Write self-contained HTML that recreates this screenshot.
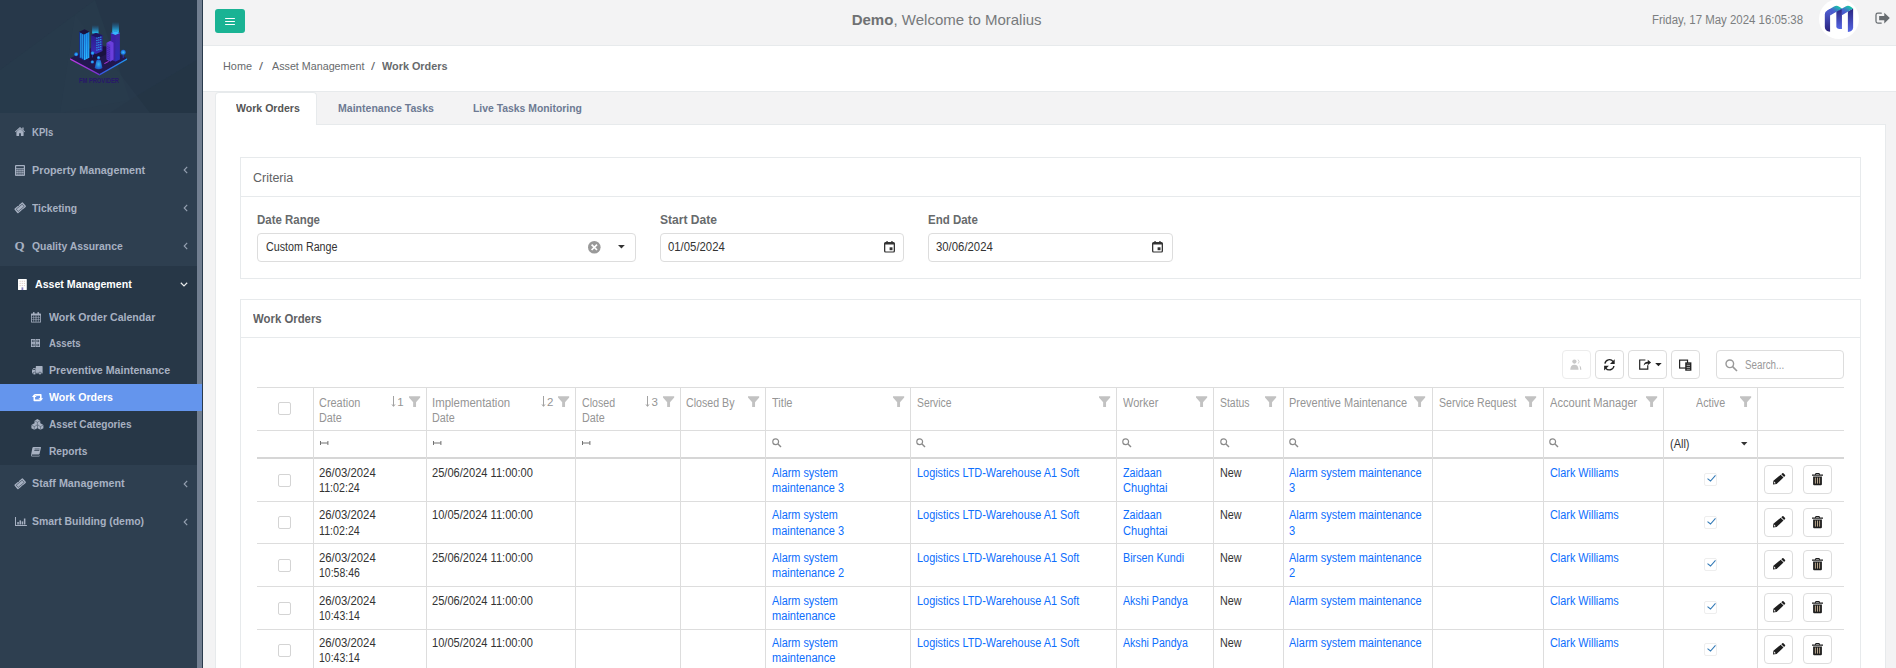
<!DOCTYPE html><html lang="en"><head><meta charset="utf-8"><title>Work Orders</title><style>
html,body{margin:0;padding:0}
body{width:1896px;height:668px;overflow:hidden;background:#f3f3f4;font-family:"Liberation Sans",sans-serif;position:relative;color:#676a6c}
.t{position:absolute;white-space:pre;line-height:1;transform-origin:0 50%}
.a{position:absolute;box-sizing:border-box}
svg{position:absolute;overflow:visible}
#side{left:0;top:0;width:197px;height:668px;background:#2e3f50}
#logo{left:0;top:0;width:197px;height:113px;background:#263848;overflow:hidden}
#strip{left:197px;top:0;width:5px;height:668px;background:#717e90}
#sline{left:202px;top:0;width:1px;height:668px;background:#2a3b4d}
#amsec{left:0;top:266px;width:197px;height:199px;background:#273747}
#amact{left:0;top:384px;width:202px;height:27px;background:#6495ed}
#head{left:203px;top:0;width:1693px;height:46px;background:#f3f3f4;border-bottom:1px solid #e7eaec}
#crumb{left:203px;top:46px;width:1693px;height:46px;background:#fff;border-bottom:1px solid #e7eaec}
#menu{left:215px;top:9px;width:30px;height:24px;background:#1ab394;border-radius:3px}
#menu i{position:absolute;left:10px;width:10px;height:1.700px;background:#fff;border-radius:.5px}
#avatar{left:1819px;top:-1px;width:40px;height:40px;border-radius:50%;background:#fff;overflow:hidden}
#tab1{left:215px;top:92px;width:102px;height:33px;background:#fff;border:1px solid #e7eaec;border-bottom:none;border-radius:4px 4px 0 0}
#tabpane{left:215px;top:124px;width:1671px;height:560px;background:#fff;border:1px solid #e7eaec;border-top:none}
#tabline{left:317px;top:124px;width:1569px;height:1px;background:#e7eaec}
.box{background:#fff;border:1px solid #e7eaec}
.hl{background:#e7eaec;height:1px}
.inp{border:1px solid #ddd;border-radius:4px;background:#fff}
.btn{border:1px solid #ddd;border-radius:4px;background:#fff;width:29px;height:29px}
.cb{width:13px;height:13px;border:1px solid #d4d4d4;border-radius:2px;background:#fff}
.vl{width:1px;background:#ddd}
.rl{height:1px;background:#ddd}
</style></head><body><header class="a" id="head"></header><div class="a" id="menu"><i style="top:8.700px"></i><i style="top:11.600px"></i><i style="top:14.500px"></i></div><span class="t" style="left:851.7px;top:12.0px;font-size:15px;color:#6f7173;font-weight:700;">Demo</span><span class="t" style="left:893.5px;top:12.0px;font-size:15px;color:#777a7c;">, Welcome to Moralius</span><span class="t" style="left:1652.2px;top:13.5px;font-size:12px;color:#7b7e80;transform:scaleX(0.9530);">Friday, 17 May 2024 16:05:38</span><div class="a" id="avatar"><svg style="left:-9px;top:1px" width="86" height="44" viewBox="0 0 1306 668"><defs>
<linearGradient id="mg1" x1="0" y1="0" x2="0" y2="1"><stop offset="0" stop-color="#5262d6"/><stop offset="1" stop-color="#29227c"/></linearGradient>
<linearGradient id="mg2" x1="0" y1="0" x2="0" y2="1"><stop offset="0" stop-color="#2a2480"/><stop offset="1" stop-color="#5566e4"/></linearGradient>
<linearGradient id="mg3" x1="0" y1="1" x2="1" y2="0"><stop offset="0" stop-color="#4650c4"/><stop offset=".45" stop-color="#4a60d0"/><stop offset=".8" stop-color="#1fb8b0"/><stop offset="1" stop-color="#0fd89a"/></linearGradient>
</defs>
<path d="M225 215Q225 175 262 158L305 138V482Q225 470 225 410z" fill="url(#mg1)"/>
<path d="M400 165 485 130V440H450Q400 440 400 400z" fill="url(#mg2)"/>
<path d="M575 175 655 130V420Q655 470 575 485z" fill="url(#mg2)"/>
<path d="M262 158 365 98Q405 78 445 102L485 130 305 235V190z" fill="url(#mg3)"/>
<path d="M400 178 540 98Q580 78 620 102L655 130 485 230V140z" fill="url(#mg3)"/></svg></div><svg style="left:1810px;top:0px" width="86" height="44" viewBox="0 0 1306 668"><path d="M1082 200H1030Q1002 200 1002 228V322Q1002 350 1030 350H1082" fill="none" stroke="#676c70" stroke-width="19" stroke-linecap="round"/><path d="M1050 243H1128V192L1212 275 1128 358V307H1050z" fill="#676c70"/></svg><div class="a" id="crumb"></div><span class="t" style="left:223.0px;top:61.0px;font-size:11px;color:#676a6c;transform:scaleX(0.9883);">Home</span><span class="t" style="left:258.5px;top:61.0px;font-size:11px;color:#676a6c;transform:scaleX(1.3061);">/</span><span class="t" style="left:272.0px;top:61.0px;font-size:11px;color:#676a6c;transform:scaleX(0.9749);">Asset Management</span><span class="t" style="left:371.0px;top:61.0px;font-size:11px;color:#676a6c;transform:scaleX(1.3061);">/</span><span class="t" style="left:381.8px;top:61.0px;font-size:11px;color:#676a6c;font-weight:700;transform:scaleX(0.9859);">Work Orders</span><div class="a" id="tabpane"></div><div class="a" id="tab1"></div><div class="a" id="tabline"></div><span class="t" style="left:236.0px;top:102.8px;font-size:11px;color:#555;font-weight:700;transform:scaleX(0.9603);">Work Orders</span><span class="t" style="left:338.4px;top:102.8px;font-size:11px;color:#6d7a93;font-weight:700;transform:scaleX(0.9584);">Maintenance Tasks</span><span class="t" style="left:472.6px;top:102.8px;font-size:11px;color:#6d7a93;font-weight:700;transform:scaleX(0.9444);">Live Tasks Monitoring</span><section class="a box" style="left:240px;top:157px;width:1621px;height:122px"></section><div class="a hl" style="left:241px;top:196px;width:1619px"></div><span class="t" style="left:253.0px;top:171.8px;font-size:12px;color:#5f6264;transform:scaleX(1.0395);">Criteria</span><span class="t" style="left:257.4px;top:214.0px;font-size:12px;color:#676a6c;font-weight:700;transform:scaleX(0.9541);">Date Range</span><span class="t" style="left:660.0px;top:214.0px;font-size:12px;color:#676a6c;font-weight:700;transform:scaleX(1.0055);">Start Date</span><span class="t" style="left:928.4px;top:214.0px;font-size:12px;color:#676a6c;font-weight:700;transform:scaleX(0.9574);">End Date</span><div class="a inp" style="left:257px;top:233px;width:379px;height:29px"></div><div class="a inp" style="left:660px;top:233px;width:244px;height:29px"></div><div class="a inp" style="left:928px;top:233px;width:245px;height:29px"></div><span class="t" style="left:265.7px;top:241.4px;font-size:12px;color:#333;transform:scaleX(0.8932);">Custom Range</span><span class="t" style="left:667.8px;top:241.4px;font-size:12px;color:#333;transform:scaleX(0.9457);">01/05/2024</span><span class="t" style="left:936.2px;top:241.4px;font-size:12px;color:#333;transform:scaleX(0.9457);">30/06/2024</span><svg style="left:587.5px;top:241px" width="12.6" height="12.6" viewBox="0 0 12.6 12.6" ><circle cx="6.3" cy="6.3" r="6.3" fill="#999"/><path d="M3.6 3.6 9 9M9 3.6 3.6 9" stroke="#fff" stroke-width="1.7"/></svg><svg style="left:617.6px;top:245.3px" width="6.8" height="3.4" viewBox="0 0 6.8 3.4" ><path d="M0 0H6.800L3.400 3.400z" fill="#333"/></svg><svg style="left:884px;top:241px" width="11" height="11.6" viewBox="0 0 11 11.6" ><path fill-rule="evenodd" fill="#333" d="M1.500 1.100h.9v-1.100h1.300v1.100h3.600v-1.100h1.300v1.100h.900q1.500 0 1.500 1.500v7.500q0 1.500-1.500 1.500h-8q-1.500 0-1.500-1.500v-7.500q0-1.500 1.500-1.500zM1.300 3.600v6.400q0 .4.400.4h7.600q.4 0 .4-.4v-6.400z"/><rect x="5.600" y="6.300" width="2.900" height="2.900" fill="#333"/></svg><svg style="left:1152.3px;top:241px" width="11" height="11.6" viewBox="0 0 11 11.6" ><path fill-rule="evenodd" fill="#333" d="M1.500 1.100h.9v-1.100h1.300v1.100h3.600v-1.100h1.300v1.100h.900q1.500 0 1.500 1.500v7.500q0 1.500-1.500 1.500h-8q-1.500 0-1.500-1.500v-7.500q0-1.500 1.500-1.500zM1.300 3.600v6.400q0 .4.400.4h7.600q.4 0 .4-.4v-6.400z"/><rect x="5.600" y="6.300" width="2.900" height="2.900" fill="#333"/></svg><section class="a box" style="left:240px;top:299px;width:1621px;height:400px"></section><div class="a hl" style="left:241px;top:337px;width:1619px"></div><span class="t" style="left:253.0px;top:313.0px;font-size:12px;color:#5f6264;font-weight:700;transform:scaleX(0.9480);">Work Orders</span><div class="a btn" style="left:1562px;top:350px;border-color:#ececec"></div><div class="a btn" style="left:1595px;top:350px"></div><div class="a btn" style="left:1628px;top:350px;width:39px"></div><div class="a btn" style="left:1671px;top:350px"></div><div class="a inp" style="left:1716px;top:350px;width:128px;height:29px"></div><span class="t" style="left:1744.8px;top:359.0px;font-size:12px;color:#999;transform:scaleX(0.8161);">Search...</span><svg style="left:1556px;top:344px" width="150" height="40" viewBox="0 0 1896 506"><g fill="#c9c9c9"><circle cx="232" cy="222" r="27"/><path d="M180 327Q180 262 232 262Q284 262 284 327z"/><path d="M278 198Q305 222 280 248" fill="none" stroke="#c9c9c9" stroke-width="10"/><path d="M296 268Q322 285 320 327H304Q304 290 296 268z"/></g><g fill="none" stroke="#222" stroke-width="17"><path d="M618 248A58 58 0 0 1 722 222"/><path d="M732 278A58 58 0 0 1 628 304"/></g><path d="M742 192V252H682z" fill="#222"/><path d="M608 334V274H668z" fill="#222"/><path d="M1130 202H1058V318H1160V270" fill="none" stroke="#222" stroke-width="15"/><path d="M1108 272Q1112 226 1160 224V200L1202 234 1160 268V246Q1128 246 1108 272z" fill="#222"/><path d="M1254 240H1336L1295 282z" fill="#222"/><rect x="1563" y="204" width="100" height="100" fill="none" stroke="#222" stroke-width="15"/><rect x="1634" y="232" width="78" height="106" fill="#222"/><rect x="1652" y="262" width="42" height="16" fill="#999"/><rect x="1652" y="290" width="42" height="16" fill="#999"/><rect x="1652" y="316" width="42" height="10" fill="#999"/><rect x="1652" y="246" width="42" height="6" fill="#777"/></svg><svg style="left:1724.5px;top:358.6px" width="13" height="13" viewBox="0 0 13 13" ><circle cx="4.800" cy="4.800" r="3.800" fill="none" stroke="#999" stroke-width="1.400"/><path d="M7.600 7.600 12 12" stroke="#999" stroke-width="1.600"/></svg><div class="a rl" style="left:257px;top:387px;width:1587px"></div><div class="a rl" style="left:257px;top:430px;width:1587px"></div><div class="a rl" style="left:257px;top:457px;width:1587px;height:2px;background:#d6d6d6"></div><div class="a rl" style="left:257px;top:501px;width:1587px"></div><div class="a rl" style="left:257px;top:543px;width:1587px"></div><div class="a rl" style="left:257px;top:586px;width:1587px"></div><div class="a rl" style="left:257px;top:629px;width:1587px"></div><div class="a vl" style="left:313px;top:388px;height:280px"></div><div class="a vl" style="left:426px;top:388px;height:280px"></div><div class="a vl" style="left:575px;top:388px;height:280px"></div><div class="a vl" style="left:680px;top:388px;height:280px"></div><div class="a vl" style="left:765px;top:388px;height:280px"></div><div class="a vl" style="left:910px;top:388px;height:280px"></div><div class="a vl" style="left:1116px;top:388px;height:280px"></div><div class="a vl" style="left:1213px;top:388px;height:280px"></div><div class="a vl" style="left:1283px;top:388px;height:280px"></div><div class="a vl" style="left:1432px;top:388px;height:280px"></div><div class="a vl" style="left:1543px;top:388px;height:280px"></div><div class="a vl" style="left:1663px;top:388px;height:280px"></div><div class="a vl" style="left:1757px;top:388px;height:280px"></div><span class="t" style="left:319.2px;top:396.6px;font-size:12px;color:#959595;transform:scaleX(0.9105);">Creation</span><span class="t" style="left:319.2px;top:411.6px;font-size:12px;color:#959595;transform:scaleX(0.8991);">Date</span><span class="t" style="left:432.3px;top:396.6px;font-size:12px;color:#959595;transform:scaleX(0.9519);">Implementation</span><span class="t" style="left:432.3px;top:411.6px;font-size:12px;color:#959595;transform:scaleX(0.8991);">Date</span><span class="t" style="left:581.9px;top:396.6px;font-size:12px;color:#959595;transform:scaleX(0.8860);">Closed</span><span class="t" style="left:581.9px;top:411.6px;font-size:12px;color:#959595;transform:scaleX(0.8991);">Date</span><span class="t" style="left:686.4px;top:396.6px;font-size:12px;color:#959595;transform:scaleX(0.8866);">Closed By</span><span class="t" style="left:772.0px;top:396.6px;font-size:12px;color:#959595;transform:scaleX(0.9220);">Title</span><span class="t" style="left:916.7px;top:396.6px;font-size:12px;color:#959595;transform:scaleX(0.8622);">Service</span><span class="t" style="left:1122.7px;top:396.6px;font-size:12px;color:#959595;transform:scaleX(0.9180);">Worker</span><span class="t" style="left:1220.4px;top:396.6px;font-size:12px;color:#959595;transform:scaleX(0.8698);">Status</span><span class="t" style="left:1289.4px;top:396.6px;font-size:12px;color:#959595;transform:scaleX(0.9165);">Preventive Maintenance</span><span class="t" style="left:1438.5px;top:396.6px;font-size:12px;color:#959595;transform:scaleX(0.8791);">Service Request</span><span class="t" style="left:1549.7px;top:396.6px;font-size:12px;color:#959595;transform:scaleX(0.9281);">Account Manager</span><span class="t" style="left:1696.2px;top:396.6px;font-size:12px;color:#959595;transform:scaleX(0.8933);">Active</span><span class="t" style="left:1669.9px;top:438.0px;font-size:12px;color:#333;transform:scaleX(0.9143);">(All)</span><div class="a cb" style="left:278px;top:402px"></div><svg style="left:390.7px;top:395.8px" width="5" height="11" viewBox="0 0 5 11" ><path d="M2.500 0V10M1 8.400 2.500 10.400 4 8.400" fill="none" stroke="#a2a2a2" stroke-width="1"/></svg><span class="t" style="left:397.2px;top:396.500px;font-size:11.500px;color:#959595">1</span><svg style="left:540.5px;top:395.8px" width="5" height="11" viewBox="0 0 5 11" ><path d="M2.500 0V10M1 8.400 2.500 10.400 4 8.400" fill="none" stroke="#a2a2a2" stroke-width="1"/></svg><span class="t" style="left:547.0px;top:396.500px;font-size:11.500px;color:#959595">2</span><svg style="left:645px;top:395.8px" width="5" height="11" viewBox="0 0 5 11" ><path d="M2.500 0V10M1 8.400 2.500 10.400 4 8.400" fill="none" stroke="#a2a2a2" stroke-width="1"/></svg><span class="t" style="left:651.5px;top:396.500px;font-size:11.500px;color:#959595">3</span><svg style="left:408.5px;top:395.6px" width="11.2" height="11.2" viewBox="0 0 11.6 11.2" ><path d="M0 0H11.600V1.400L7.300 6.300V11.200H4.300V6.300L0 1.400z" fill="#c2c2c2"/></svg><svg style="left:557.5px;top:395.6px" width="11.2" height="11.2" viewBox="0 0 11.6 11.2" ><path d="M0 0H11.600V1.400L7.300 6.300V11.200H4.300V6.300L0 1.400z" fill="#c2c2c2"/></svg><svg style="left:662.6px;top:395.6px" width="11.2" height="11.2" viewBox="0 0 11.6 11.2" ><path d="M0 0H11.600V1.400L7.300 6.300V11.200H4.300V6.300L0 1.400z" fill="#c2c2c2"/></svg><svg style="left:748px;top:395.6px" width="11.2" height="11.2" viewBox="0 0 11.6 11.2" ><path d="M0 0H11.600V1.400L7.300 6.300V11.200H4.300V6.300L0 1.400z" fill="#c2c2c2"/></svg><svg style="left:892.5px;top:395.6px" width="11.2" height="11.2" viewBox="0 0 11.6 11.2" ><path d="M0 0H11.600V1.400L7.300 6.300V11.200H4.300V6.300L0 1.400z" fill="#c2c2c2"/></svg><svg style="left:1098.5px;top:395.6px" width="11.2" height="11.2" viewBox="0 0 11.6 11.2" ><path d="M0 0H11.600V1.400L7.300 6.300V11.200H4.300V6.300L0 1.400z" fill="#c2c2c2"/></svg><svg style="left:1195.6px;top:395.6px" width="11.2" height="11.2" viewBox="0 0 11.6 11.2" ><path d="M0 0H11.600V1.400L7.300 6.300V11.200H4.300V6.300L0 1.400z" fill="#c2c2c2"/></svg><svg style="left:1265.3px;top:395.6px" width="11.2" height="11.2" viewBox="0 0 11.6 11.2" ><path d="M0 0H11.600V1.400L7.300 6.300V11.200H4.300V6.300L0 1.400z" fill="#c2c2c2"/></svg><svg style="left:1414.3px;top:395.6px" width="11.2" height="11.2" viewBox="0 0 11.6 11.2" ><path d="M0 0H11.600V1.400L7.300 6.300V11.200H4.300V6.300L0 1.400z" fill="#c2c2c2"/></svg><svg style="left:1525.4px;top:395.6px" width="11.2" height="11.2" viewBox="0 0 11.6 11.2" ><path d="M0 0H11.600V1.400L7.300 6.300V11.200H4.300V6.300L0 1.400z" fill="#c2c2c2"/></svg><svg style="left:1645.8px;top:395.6px" width="11.2" height="11.2" viewBox="0 0 11.6 11.2" ><path d="M0 0H11.600V1.400L7.300 6.300V11.200H4.300V6.300L0 1.400z" fill="#c2c2c2"/></svg><svg style="left:1740.2px;top:395.6px" width="11.2" height="11.2" viewBox="0 0 11.6 11.2" ><path d="M0 0H11.600V1.400L7.300 6.300V11.200H4.300V6.300L0 1.400z" fill="#c2c2c2"/></svg><svg style="left:319.8px;top:440.7px" width="8.4" height="4" viewBox="0 0 8.4 4" ><path d="M.5 0V4M7.900 0V4M.5 2H7.900" stroke="#707070" stroke-width="1" fill="none"/></svg><svg style="left:432.8px;top:440.7px" width="8.4" height="4" viewBox="0 0 8.4 4" ><path d="M.5 0V4M7.900 0V4M.5 2H7.900" stroke="#707070" stroke-width="1" fill="none"/></svg><svg style="left:582.4px;top:440.7px" width="8.4" height="4" viewBox="0 0 8.4 4" ><path d="M.5 0V4M7.900 0V4M.5 2H7.900" stroke="#707070" stroke-width="1" fill="none"/></svg><svg style="left:771.6px;top:437.8px" width="9.6" height="9.6" viewBox="0 0 9.6 9.6" ><circle cx="3.700" cy="3.700" r="2.900" fill="none" stroke="#8a8a8a" stroke-width="1.200"/><path d="M5.800 5.800 9 9" stroke="#8a8a8a" stroke-width="1.400"/></svg><svg style="left:916.3px;top:437.8px" width="9.6" height="9.6" viewBox="0 0 9.6 9.6" ><circle cx="3.700" cy="3.700" r="2.900" fill="none" stroke="#8a8a8a" stroke-width="1.200"/><path d="M5.800 5.800 9 9" stroke="#8a8a8a" stroke-width="1.400"/></svg><svg style="left:1122.3px;top:437.8px" width="9.6" height="9.6" viewBox="0 0 9.6 9.6" ><circle cx="3.700" cy="3.700" r="2.900" fill="none" stroke="#8a8a8a" stroke-width="1.200"/><path d="M5.800 5.800 9 9" stroke="#8a8a8a" stroke-width="1.400"/></svg><svg style="left:1220px;top:437.8px" width="9.6" height="9.6" viewBox="0 0 9.6 9.6" ><circle cx="3.700" cy="3.700" r="2.900" fill="none" stroke="#8a8a8a" stroke-width="1.200"/><path d="M5.800 5.800 9 9" stroke="#8a8a8a" stroke-width="1.400"/></svg><svg style="left:1289px;top:437.8px" width="9.6" height="9.6" viewBox="0 0 9.6 9.6" ><circle cx="3.700" cy="3.700" r="2.900" fill="none" stroke="#8a8a8a" stroke-width="1.200"/><path d="M5.800 5.800 9 9" stroke="#8a8a8a" stroke-width="1.400"/></svg><svg style="left:1549.3px;top:437.8px" width="9.6" height="9.6" viewBox="0 0 9.6 9.6" ><circle cx="3.700" cy="3.700" r="2.900" fill="none" stroke="#8a8a8a" stroke-width="1.200"/><path d="M5.800 5.800 9 9" stroke="#8a8a8a" stroke-width="1.400"/></svg><svg style="left:1740.8px;top:441.8px" width="6.4" height="3.4" viewBox="0 0 6.4 3.4" ><path d="M0 0H6.400L3.200 3.400z" fill="#333"/></svg><div class="a cb" style="left:278px;top:474px"></div><span class="t" style="left:319.2px;top:467.2px;font-size:12px;color:#333;transform:scaleX(0.9440);">26/03/2024</span><span class="t" style="left:319.2px;top:482.2px;font-size:12px;color:#333;transform:scaleX(0.8903);">11:02:24</span><span class="t" style="left:432.3px;top:467.2px;font-size:12px;color:#333;transform:scaleX(0.9238);">25/06/2024 11:00:00</span><span class="t" style="left:772.0px;top:467.2px;font-size:12px;color:#0d6efd;transform:scaleX(0.9052);">Alarm system</span><span class="t" style="left:772.0px;top:482.2px;font-size:12px;color:#0d6efd;transform:scaleX(0.9145);">maintenance 3</span><span class="t" style="left:916.7px;top:467.2px;font-size:12px;color:#0d6efd;transform:scaleX(0.9085);">Logistics LTD-Warehouse A1 Soft</span><span class="t" style="left:1122.7px;top:467.2px;font-size:12px;color:#0d6efd;transform:scaleX(0.8922);">Zaidaan</span><span class="t" style="left:1122.7px;top:482.2px;font-size:12px;color:#0d6efd;transform:scaleX(0.9241);">Chughtai</span><span class="t" style="left:1220.4px;top:467.2px;font-size:12px;color:#333;transform:scaleX(0.8994);">New</span><span class="t" style="left:1289.4px;top:467.2px;font-size:12px;color:#0d6efd;transform:scaleX(0.9162);">Alarm system maintenance</span><span class="t" style="left:1289.4px;top:482.2px;font-size:12px;color:#0d6efd;transform:scaleX(0.9271);">3</span><span class="t" style="left:1549.7px;top:467.2px;font-size:12px;color:#0d6efd;transform:scaleX(0.9053);">Clark Williams</span><div class="a btn" style="left:1764px;top:465px"></div><div class="a btn" style="left:1803px;top:465px"></div><div class="a" style="left:1704.4px;top:473.2px;width:12.400px;height:12.400px;border:1px solid #eee;border-radius:2px"></div><svg style="left:1706.6px;top:474.8px" width="9" height="6.6" viewBox="0 0 9 6.6" ><path d="M.5 3.600 3.500 6 8.500 .4" fill="none" stroke="#337ab7" stroke-width="1.100"/></svg><svg style="left:1772.6px;top:473.4px" width="12.4" height="11.4" viewBox="0 0 12.4 11.4" ><g fill="#1e1e1e"><path d="M9.300 0.200Q9.900-.3 10.500.3L12.100 1.900Q12.600 2.500 12 3.100L11.100 4 8.300 1.200z"/><path d="M7.700 1.800 10.500 4.600 3.600 11 0 11.400.4 7.800zM1.200 8.600 1 10.400 2.800 10.200z" fill-rule="evenodd"/></g></svg><svg style="left:1811.6px;top:472.8px" width="11" height="12.2" viewBox="0 0 11 12.2" ><g fill="#1e1e1e"><path d="M3.600 0H7.400L8 1.600H11V2.800H0V1.600H3zM4.200 .9 4 1.600H7L6.800.9z" fill-rule="evenodd"/><path d="M1.100 3.400H9.900V11.200Q9.900 12.200 8.900 12.200H2.100Q1.100 12.200 1.100 11.200z"/></g><g fill="#b9a68c"><rect x="2.900" y="4.600" width="1" height="6"/><rect x="5" y="4.600" width="1" height="6"/><rect x="7.100" y="4.600" width="1" height="6"/></g></svg><div class="a cb" style="left:278px;top:516px"></div><span class="t" style="left:319.2px;top:509.2px;font-size:12px;color:#333;transform:scaleX(0.9440);">26/03/2024</span><span class="t" style="left:319.2px;top:525.0px;font-size:12px;color:#333;transform:scaleX(0.8903);">11:02:24</span><span class="t" style="left:432.3px;top:509.2px;font-size:12px;color:#333;transform:scaleX(0.9238);">10/05/2024 11:00:00</span><span class="t" style="left:772.0px;top:509.2px;font-size:12px;color:#0d6efd;transform:scaleX(0.9052);">Alarm system</span><span class="t" style="left:772.0px;top:525.0px;font-size:12px;color:#0d6efd;transform:scaleX(0.9145);">maintenance 3</span><span class="t" style="left:916.7px;top:509.2px;font-size:12px;color:#0d6efd;transform:scaleX(0.9085);">Logistics LTD-Warehouse A1 Soft</span><span class="t" style="left:1122.7px;top:509.2px;font-size:12px;color:#0d6efd;transform:scaleX(0.8922);">Zaidaan</span><span class="t" style="left:1122.7px;top:525.0px;font-size:12px;color:#0d6efd;transform:scaleX(0.9241);">Chughtai</span><span class="t" style="left:1220.4px;top:509.2px;font-size:12px;color:#333;transform:scaleX(0.8994);">New</span><span class="t" style="left:1289.4px;top:509.2px;font-size:12px;color:#0d6efd;transform:scaleX(0.9162);">Alarm system maintenance</span><span class="t" style="left:1289.4px;top:525.0px;font-size:12px;color:#0d6efd;transform:scaleX(0.9271);">3</span><span class="t" style="left:1549.7px;top:509.2px;font-size:12px;color:#0d6efd;transform:scaleX(0.9053);">Clark Williams</span><div class="a btn" style="left:1764px;top:508px"></div><div class="a btn" style="left:1803px;top:508px"></div><div class="a" style="left:1704.4px;top:516.2px;width:12.400px;height:12.400px;border:1px solid #eee;border-radius:2px"></div><svg style="left:1706.6px;top:517.8000000000001px" width="9" height="6.6" viewBox="0 0 9 6.6" ><path d="M.5 3.600 3.500 6 8.500 .4" fill="none" stroke="#337ab7" stroke-width="1.100"/></svg><svg style="left:1772.6px;top:516.4000000000001px" width="12.4" height="11.4" viewBox="0 0 12.4 11.4" ><g fill="#1e1e1e"><path d="M9.300 0.200Q9.900-.3 10.500.3L12.100 1.900Q12.600 2.500 12 3.100L11.100 4 8.300 1.200z"/><path d="M7.700 1.800 10.500 4.600 3.600 11 0 11.400.4 7.800zM1.200 8.600 1 10.400 2.800 10.200z" fill-rule="evenodd"/></g></svg><svg style="left:1811.6px;top:515.8000000000001px" width="11" height="12.2" viewBox="0 0 11 12.2" ><g fill="#1e1e1e"><path d="M3.600 0H7.400L8 1.600H11V2.800H0V1.600H3zM4.200 .9 4 1.600H7L6.800.9z" fill-rule="evenodd"/><path d="M1.100 3.400H9.900V11.200Q9.900 12.200 8.900 12.200H2.100Q1.100 12.200 1.100 11.200z"/></g><g fill="#b9a68c"><rect x="2.900" y="4.600" width="1" height="6"/><rect x="5" y="4.600" width="1" height="6"/><rect x="7.100" y="4.600" width="1" height="6"/></g></svg><div class="a cb" style="left:278px;top:559px"></div><span class="t" style="left:319.2px;top:552.0px;font-size:12px;color:#333;transform:scaleX(0.9440);">26/03/2024</span><span class="t" style="left:319.2px;top:567.2px;font-size:12px;color:#333;transform:scaleX(0.8733);">10:58:46</span><span class="t" style="left:432.3px;top:552.0px;font-size:12px;color:#333;transform:scaleX(0.9238);">25/06/2024 11:00:00</span><span class="t" style="left:772.0px;top:552.0px;font-size:12px;color:#0d6efd;transform:scaleX(0.9052);">Alarm system</span><span class="t" style="left:772.0px;top:567.2px;font-size:12px;color:#0d6efd;transform:scaleX(0.9145);">maintenance 2</span><span class="t" style="left:916.7px;top:552.0px;font-size:12px;color:#0d6efd;transform:scaleX(0.9085);">Logistics LTD-Warehouse A1 Soft</span><span class="t" style="left:1122.7px;top:552.0px;font-size:12px;color:#0d6efd;transform:scaleX(0.8979);">Birsen Kundi</span><span class="t" style="left:1220.4px;top:552.0px;font-size:12px;color:#333;transform:scaleX(0.8994);">New</span><span class="t" style="left:1289.4px;top:552.0px;font-size:12px;color:#0d6efd;transform:scaleX(0.9162);">Alarm system maintenance</span><span class="t" style="left:1289.4px;top:567.2px;font-size:12px;color:#0d6efd;transform:scaleX(0.9271);">2</span><span class="t" style="left:1549.7px;top:552.0px;font-size:12px;color:#0d6efd;transform:scaleX(0.9053);">Clark Williams</span><div class="a btn" style="left:1764px;top:550px"></div><div class="a btn" style="left:1803px;top:550px"></div><div class="a" style="left:1704.4px;top:558.2px;width:12.400px;height:12.400px;border:1px solid #eee;border-radius:2px"></div><svg style="left:1706.6px;top:559.8000000000001px" width="9" height="6.6" viewBox="0 0 9 6.6" ><path d="M.5 3.600 3.500 6 8.500 .4" fill="none" stroke="#337ab7" stroke-width="1.100"/></svg><svg style="left:1772.6px;top:558.4000000000001px" width="12.4" height="11.4" viewBox="0 0 12.4 11.4" ><g fill="#1e1e1e"><path d="M9.300 0.200Q9.900-.3 10.500.3L12.100 1.900Q12.600 2.500 12 3.100L11.100 4 8.300 1.200z"/><path d="M7.700 1.800 10.500 4.600 3.600 11 0 11.400.4 7.800zM1.200 8.600 1 10.400 2.800 10.200z" fill-rule="evenodd"/></g></svg><svg style="left:1811.6px;top:557.8000000000001px" width="11" height="12.2" viewBox="0 0 11 12.2" ><g fill="#1e1e1e"><path d="M3.600 0H7.400L8 1.600H11V2.800H0V1.600H3zM4.200 .9 4 1.600H7L6.800.9z" fill-rule="evenodd"/><path d="M1.100 3.400H9.900V11.200Q9.900 12.200 8.900 12.200H2.100Q1.100 12.200 1.100 11.200z"/></g><g fill="#b9a68c"><rect x="2.900" y="4.600" width="1" height="6"/><rect x="5" y="4.600" width="1" height="6"/><rect x="7.100" y="4.600" width="1" height="6"/></g></svg><div class="a cb" style="left:278px;top:602px"></div><span class="t" style="left:319.2px;top:595.4px;font-size:12px;color:#333;transform:scaleX(0.9440);">26/03/2024</span><span class="t" style="left:319.2px;top:610.4px;font-size:12px;color:#333;transform:scaleX(0.8733);">10:43:14</span><span class="t" style="left:432.3px;top:595.4px;font-size:12px;color:#333;transform:scaleX(0.9238);">25/06/2024 11:00:00</span><span class="t" style="left:772.0px;top:595.4px;font-size:12px;color:#0d6efd;transform:scaleX(0.9052);">Alarm system</span><span class="t" style="left:772.0px;top:610.4px;font-size:12px;color:#0d6efd;transform:scaleX(0.9241);">maintenance</span><span class="t" style="left:916.7px;top:595.4px;font-size:12px;color:#0d6efd;transform:scaleX(0.9085);">Logistics LTD-Warehouse A1 Soft</span><span class="t" style="left:1122.7px;top:595.4px;font-size:12px;color:#0d6efd;transform:scaleX(0.8829);">Akshi Pandya</span><span class="t" style="left:1220.4px;top:595.4px;font-size:12px;color:#333;transform:scaleX(0.8994);">New</span><span class="t" style="left:1289.4px;top:595.4px;font-size:12px;color:#0d6efd;transform:scaleX(0.9162);">Alarm system maintenance</span><span class="t" style="left:1549.7px;top:595.4px;font-size:12px;color:#0d6efd;transform:scaleX(0.9053);">Clark Williams</span><div class="a btn" style="left:1764px;top:593px"></div><div class="a btn" style="left:1803px;top:593px"></div><div class="a" style="left:1704.4px;top:601.2px;width:12.400px;height:12.400px;border:1px solid #eee;border-radius:2px"></div><svg style="left:1706.6px;top:602.8000000000001px" width="9" height="6.6" viewBox="0 0 9 6.6" ><path d="M.5 3.600 3.500 6 8.500 .4" fill="none" stroke="#337ab7" stroke-width="1.100"/></svg><svg style="left:1772.6px;top:601.4000000000001px" width="12.4" height="11.4" viewBox="0 0 12.4 11.4" ><g fill="#1e1e1e"><path d="M9.300 0.200Q9.900-.3 10.500.3L12.100 1.900Q12.600 2.500 12 3.100L11.100 4 8.300 1.200z"/><path d="M7.700 1.800 10.500 4.600 3.600 11 0 11.400.4 7.800zM1.200 8.600 1 10.400 2.800 10.200z" fill-rule="evenodd"/></g></svg><svg style="left:1811.6px;top:600.8000000000001px" width="11" height="12.2" viewBox="0 0 11 12.2" ><g fill="#1e1e1e"><path d="M3.600 0H7.400L8 1.600H11V2.800H0V1.600H3zM4.200 .9 4 1.600H7L6.800.9z" fill-rule="evenodd"/><path d="M1.100 3.400H9.900V11.200Q9.900 12.200 8.900 12.200H2.100Q1.100 12.200 1.100 11.200z"/></g><g fill="#b9a68c"><rect x="2.900" y="4.600" width="1" height="6"/><rect x="5" y="4.600" width="1" height="6"/><rect x="7.100" y="4.600" width="1" height="6"/></g></svg><div class="a cb" style="left:278px;top:644px"></div><span class="t" style="left:319.2px;top:637.0px;font-size:12px;color:#333;transform:scaleX(0.9440);">26/03/2024</span><span class="t" style="left:319.2px;top:652.0px;font-size:12px;color:#333;transform:scaleX(0.8733);">10:43:14</span><span class="t" style="left:432.3px;top:637.0px;font-size:12px;color:#333;transform:scaleX(0.9238);">10/05/2024 11:00:00</span><span class="t" style="left:772.0px;top:637.0px;font-size:12px;color:#0d6efd;transform:scaleX(0.9052);">Alarm system</span><span class="t" style="left:772.0px;top:652.0px;font-size:12px;color:#0d6efd;transform:scaleX(0.9241);">maintenance</span><span class="t" style="left:916.7px;top:637.0px;font-size:12px;color:#0d6efd;transform:scaleX(0.9085);">Logistics LTD-Warehouse A1 Soft</span><span class="t" style="left:1122.7px;top:637.0px;font-size:12px;color:#0d6efd;transform:scaleX(0.8829);">Akshi Pandya</span><span class="t" style="left:1220.4px;top:637.0px;font-size:12px;color:#333;transform:scaleX(0.8994);">New</span><span class="t" style="left:1289.4px;top:637.0px;font-size:12px;color:#0d6efd;transform:scaleX(0.9162);">Alarm system maintenance</span><span class="t" style="left:1549.7px;top:637.0px;font-size:12px;color:#0d6efd;transform:scaleX(0.9053);">Clark Williams</span><div class="a btn" style="left:1764px;top:635px"></div><div class="a btn" style="left:1803px;top:635px"></div><div class="a" style="left:1704.4px;top:643.2px;width:12.400px;height:12.400px;border:1px solid #eee;border-radius:2px"></div><svg style="left:1706.6px;top:644.8000000000001px" width="9" height="6.6" viewBox="0 0 9 6.6" ><path d="M.5 3.600 3.500 6 8.500 .4" fill="none" stroke="#337ab7" stroke-width="1.100"/></svg><svg style="left:1772.6px;top:643.4000000000001px" width="12.4" height="11.4" viewBox="0 0 12.4 11.4" ><g fill="#1e1e1e"><path d="M9.300 0.200Q9.900-.3 10.500.3L12.100 1.900Q12.600 2.500 12 3.100L11.100 4 8.300 1.200z"/><path d="M7.700 1.800 10.500 4.600 3.600 11 0 11.400.4 7.800zM1.200 8.600 1 10.400 2.800 10.200z" fill-rule="evenodd"/></g></svg><svg style="left:1811.6px;top:642.8000000000001px" width="11" height="12.2" viewBox="0 0 11 12.2" ><g fill="#1e1e1e"><path d="M3.600 0H7.400L8 1.600H11V2.800H0V1.600H3zM4.200 .9 4 1.600H7L6.800.9z" fill-rule="evenodd"/><path d="M1.100 3.400H9.900V11.200Q9.900 12.200 8.900 12.200H2.100Q1.100 12.200 1.100 11.200z"/></g><g fill="#b9a68c"><rect x="2.900" y="4.600" width="1" height="6"/><rect x="5" y="4.600" width="1" height="6"/><rect x="7.100" y="4.600" width="1" height="6"/></g></svg><nav class="a" id="side"><div class="a" id="logo"><svg style="left:0;top:0" width="197" height="113" viewBox="0 0 197 113"><polygon points="0,0 95,0 0,70" fill="#27384a"/><polygon points="95,0 197,0 197,60 130,100" fill="#24364a" opacity=".6"/><polygon points="0,70 95,0 130,100 60,113 0,113" fill="#273a4b"/><polygon points="130,100 197,60 197,113 110,113" fill="#243545"/><polygon points="75,15 150,113 60,113" fill="#2a3c4d" opacity=".5"/></svg><svg style="left:60px;top:15px" width="80" height="80" viewBox="0 0 668 668"><defs>
<linearGradient id="cb" x1="0" y1="1" x2="0" y2="0"><stop offset="0" stop-color="#27c8ff" stop-opacity=".95"/><stop offset="1" stop-color="#1b7fd0" stop-opacity="0"/></linearGradient>
<linearGradient id="c1" x1="0" y1="0" x2="0" y2="1"><stop offset="0" stop-color="#1c8fe6"/><stop offset="1" stop-color="#29b6ff"/></linearGradient>
<linearGradient id="c2" x1="0" y1="0" x2="0" y2="1"><stop offset="0" stop-color="#2a1a86"/><stop offset="1" stop-color="#3a2bb5"/></linearGradient>
<linearGradient id="c3" x1="0" y1="0" x2="0" y2="1"><stop offset="0" stop-color="#43259f"/><stop offset="1" stop-color="#2a2fb8"/></linearGradient>
<linearGradient id="c4" x1="0" y1="0" x2="1" y2="0"><stop offset="0" stop-color="#c238e6"/><stop offset="1" stop-color="#7a2fd6"/></linearGradient>
<linearGradient id="c5" x1="0" y1="0" x2="1" y2="0"><stop offset="0" stop-color="#3a50e8"/><stop offset="1" stop-color="#1f9cf5"/></linearGradient>
<radialGradient id="tr"><stop offset="0" stop-color="#35c4ff"/><stop offset="1" stop-color="#1a62d8"/></radialGradient>
</defs>
<polygon points="85,362 330,240 560,362 330,492" fill="#22174f"/>
<polygon points="85,362 330,492 330,506 85,374" fill="url(#c4)"/>
<polygon points="330,492 560,362 560,374 330,506" fill="url(#c5)"/>
<polygon points="200,330 380,260 440,300 260,390" fill="#1a123f"/>
<rect x="268" y="84" width="54" height="70" fill="url(#cb)"/>
<rect x="436" y="58" width="56" height="85" fill="url(#cb)"/>
<polygon points="260,170 300,150 355,170 355,300 300,325 260,305" fill="url(#c2)"/>
<polygon points="260,170 300,150 355,170 312,190" fill="#1d1560"/>
<g fill="#27b8ff"><rect x="304" y="188" width="9" height="10"/><rect x="320" y="184" width="9" height="10"/><rect x="336" y="180" width="9" height="10"/><rect x="304" y="208" width="9" height="10"/><rect x="320" y="204" width="9" height="10"/><rect x="336" y="200" width="9" height="10"/><rect x="304" y="228" width="9" height="10"/><rect x="320" y="224" width="9" height="10"/><rect x="336" y="220" width="9" height="10"/><rect x="304" y="248" width="9" height="10"/><rect x="320" y="244" width="9" height="10"/><rect x="336" y="240" width="9" height="10"/><rect x="304" y="268" width="9" height="10"/><rect x="320" y="264" width="9" height="10"/><rect x="336" y="260" width="9" height="10"/><rect x="304" y="288" width="9" height="10"/><rect x="320" y="284" width="9" height="10"/><rect x="336" y="280" width="9" height="10"/></g>
<polygon points="160,140 200,160 200,378 160,356" fill="#14308f"/>
<polygon points="200,160 245,140 245,356 200,378" fill="url(#c1)"/>
<polygon points="160,140 205,118 245,140 200,162" fill="#1a113d"/>
<rect x="170" y="152" width="9" height="205" fill="#27b4ff"/><rect x="186" y="160" width="8" height="205" fill="#27b4ff"/>
<rect x="210" y="160" width="7" height="205" fill="#1462c8" opacity=".8"/><rect x="228" y="152" width="7" height="205" fill="#1462c8" opacity=".8"/>
<polygon points="425,150 465,135 500,150 500,372 465,388 425,372" fill="url(#c3)"/>
<polygon points="425,150 462,168 462,388 425,372" fill="#3c22a4"/>
<polygon points="425,150 465,135 500,150 462,168" fill="#35b8ff"/>
<polygon points="390,232 420,215 447,232 447,372 420,388 390,372" fill="#6a3fdc"/>
<polygon points="390,232 420,250 420,388 390,372" fill="#5a35c8"/>
<g stroke="#3a229a" stroke-width="5"><path d="M392 262L418 274"/><path d="M392 278L418 290"/><path d="M392 294L418 306"/><path d="M392 310L418 322"/><path d="M392 326L418 338"/><path d="M392 342L418 354"/><path d="M392 358L418 370"/></g>
<circle cx="135" cy="328" r="16" fill="url(#tr)"/><circle cx="272" cy="318" r="16" fill="url(#tr)"/>
<circle cx="528" cy="312" r="21" fill="url(#tr)"/><circle cx="322" cy="356" r="14" fill="url(#tr)"/>
<circle cx="270" cy="392" r="14" fill="url(#tr)"/>
<rect x="524" y="330" width="7" height="28" fill="#2a3ad0"/><rect x="269" y="332" width="5" height="22" fill="#2a3ad0"/>
<path d="M304 380Q322 362 341 380L354 442Q322 462 290 442z" fill="url(#tr)" opacity=".9"/>
<rect x="368" y="392" width="40" height="9" fill="#b435e0" transform="rotate(-28 388 396)"/>
</svg><span class="t" style="left:78.7px;top:78.1px;font-size:6.3px;color:#27176a;font-weight:700;transform:scaleX(0.9123);">FM PROVIDER</span></div><div class="a" id="amsec"></div><span class="t" style="left:32.0px;top:127.0px;font-size:11px;color:#a7b1c2;font-weight:700;transform:scaleX(0.8664);">KPIs</span><span class="t" style="left:32.0px;top:165.0px;font-size:11px;color:#a7b1c2;font-weight:700;transform:scaleX(0.9798);">Property Management</span><span class="t" style="left:32.0px;top:203.0px;font-size:11px;color:#a7b1c2;font-weight:700;transform:scaleX(0.9357);">Ticketing</span><span class="t" style="left:32.0px;top:241.0px;font-size:11px;color:#a7b1c2;font-weight:700;transform:scaleX(0.9429);">Quality Assurance</span><span class="t" style="left:35.0px;top:279.0px;font-size:11px;color:#fff;font-weight:700;transform:scaleX(0.9644);">Asset Management</span><span class="t" style="left:48.9px;top:311.6px;font-size:11px;color:#a7b1c2;font-weight:700;transform:scaleX(0.9624);">Work Order Calendar</span><span class="t" style="left:48.9px;top:337.8px;font-size:11px;color:#a7b1c2;font-weight:700;transform:scaleX(0.8759);">Assets</span><span class="t" style="left:48.9px;top:364.9px;font-size:11px;color:#a7b1c2;font-weight:700;transform:scaleX(0.9661);">Preventive Maintenance</span><span class="t" style="left:48.9px;top:418.9px;font-size:11px;color:#a7b1c2;font-weight:700;transform:scaleX(0.9191);">Asset Categories</span><span class="t" style="left:48.9px;top:445.9px;font-size:11px;color:#a7b1c2;font-weight:700;transform:scaleX(0.9239);">Reports</span><span class="t" style="left:32.0px;top:477.8px;font-size:11px;color:#a7b1c2;font-weight:700;transform:scaleX(0.9784);">Staff Management</span><span class="t" style="left:32.0px;top:515.9px;font-size:11px;color:#a7b1c2;font-weight:700;transform:scaleX(0.9504);">Smart Building (demo)</span><svg style="left:14.8px;top:127.3px" width="10" height="9" viewBox="0 0 10 9" ><g fill="#a7b1c2"><path d="M5 0 10 4.4 9.350 5.150 5 1.400 .650 5.150 0 4.400z"/><path d="M7.300.500h1.300v2.600l-1.300-1.100z"/><path d="M1.400 4.900 5 1.800 8.600 4.900V8.600Q8.600 9 8.200 9H5.900V6.200H4.100V9H1.800Q1.400 9 1.400 8.600z"/></g></svg><svg style="left:15px;top:165px" width="10" height="11" viewBox="0 0 10 11" ><path fill="#a7b1c2" fill-rule="evenodd" d="M1 0h8q1 0 1 1v9q0 1-1 1h-8q-1 0-1-1v-9q0-1 1-1zM1.200 1.200v2h7.600v-2z"/><g fill="#2e3f50" opacity=".85"><rect x="1" y="4" width="8" height=".55"/><rect x="1" y="6" width="8" height=".5"/><rect x="1" y="8" width="8" height=".5"/><rect x="2.85" y="4" width=".5" height="6"/><rect x="4.75" y="4" width=".5" height="6"/><rect x="6.65" y="4" width=".5" height="6"/><rect x="1" y="4" width=".35" height="6"/><rect x="8.650" y="4" width=".35" height="6"/><rect x="1" y="9.800" width="8" height=".3"/></g></svg><svg style="left:14.8px;top:203.2px" width="10.4" height="9.6" viewBox="0 0 10.4 9.6" ><g transform="rotate(-40 5.200 4.800)"><rect x="-.3" y="1.900" width="11" height="5.800" rx=".8" fill="#a7b1c2"/><rect x="1.300" y="3.300" width="7.800" height="3" fill="none" stroke="#2e3f50" stroke-width=".6" opacity=".9"/><circle cx="5.200" cy="1.700" r=".6" fill="#2e3f50"/><circle cx="5.200" cy="7.900" r=".6" fill="#2e3f50"/></g></svg><span class="t" style="left:14.5px;top:238.900px;font-size:13px;font-weight:700;color:#a7b1c2;font-family:'Liberation Serif',serif">Q</span><svg style="left:17.6px;top:278.8px" width="8.8" height="11.1" viewBox="0 0 9 11.4" ><rect x="0" y="0" width="9" height="11.4" rx=".6" fill="#fff"/><g fill="#c9a9a0" opacity=".55"><rect x="1.6" y="1.8" width="1.2" height="1.1"/><rect x="3.8" y="1.8" width="1.2" height="1.1"/><rect x="6.0" y="1.8" width="1.2" height="1.1"/><rect x="1.6" y="4.0" width="1.2" height="1.1"/><rect x="3.8" y="4.0" width="1.2" height="1.1"/><rect x="6.0" y="4.0" width="1.2" height="1.1"/><rect x="1.6" y="6.2" width="1.2" height="1.1"/><rect x="3.8" y="6.2" width="1.2" height="1.1"/><rect x="6.0" y="6.2" width="1.2" height="1.1"/></g><rect x="3.6" y="8.6" width="1.8" height="2.8" fill="#6a5fb0" opacity=".8"/></svg><svg style="left:183px;top:166px" width="5" height="8" viewBox="0 0 5 8" ><path d="M4.2.8 1.2 4 4.2 7.2" fill="none" stroke="#a7b1c2" stroke-width="1.150" opacity=".85"/></svg><svg style="left:183px;top:204px" width="5" height="8" viewBox="0 0 5 8" ><path d="M4.2.8 1.2 4 4.2 7.2" fill="none" stroke="#a7b1c2" stroke-width="1.150" opacity=".85"/></svg><svg style="left:183px;top:242px" width="5" height="8" viewBox="0 0 5 8" ><path d="M4.2.8 1.2 4 4.2 7.2" fill="none" stroke="#a7b1c2" stroke-width="1.150" opacity=".85"/></svg><svg style="left:183px;top:479.5px" width="5" height="8" viewBox="0 0 5 8" ><path d="M4.2.8 1.2 4 4.2 7.2" fill="none" stroke="#a7b1c2" stroke-width="1.150" opacity=".85"/></svg><svg style="left:183px;top:517.5px" width="5" height="8" viewBox="0 0 5 8" ><path d="M4.2.8 1.2 4 4.2 7.2" fill="none" stroke="#a7b1c2" stroke-width="1.150" opacity=".85"/></svg><svg style="left:179.5px;top:282px" width="8" height="5" viewBox="0 0 8 5" ><path d="M.8.8 4 3.9 7.2.8" fill="none" stroke="#fff" stroke-width="1.2" opacity=".9"/></svg><svg style="left:31.2px;top:312.1px" width="10" height="10.6" viewBox="0 0 10 10.6" ><g fill="#a7b1c2"><path fill-rule="evenodd" d="M.6 1.4h8.8q.6 0 .6.6v8q0 .6-.6.6h-8.8q-.6 0-.6-.6v-8q0-.6.6-.6zM.8 3.6v6.2h8.4v-6.2z"/><rect x="2" y="0" width="1.5" height="2.6" rx=".6"/><rect x="6.5" y="0" width="1.5" height="2.6" rx=".6"/><rect x="2.23" y="3.6" width=".5" height="6.2"/><rect x="3.91" y="3.6" width=".5" height="6.2"/><rect x="5.59" y="3.6" width=".5" height="6.2"/><rect x="7.27" y="3.6" width=".5" height="6.2"/><rect x=".8" y="5.5" width="8.4" height=".45"/><rect x=".8" y="7.5" width="8.4" height=".45"/></g></svg><svg style="left:31.2px;top:339px" width="9" height="8" viewBox="0 0 9 8" ><g fill="none" stroke="#a7b1c2" stroke-width=".9"><rect x=".45" y=".45" width="3.4" height="3.1"/><rect x="5.15" y=".45" width="3.4" height="3.1"/><rect x=".45" y="4.45" width="3.4" height="3.1"/><rect x="5.15" y="4.45" width="3.4" height="3.1"/></g><g fill="#a7b1c2"><rect x="1.5" y="1.3" width="1.3" height="1.3"/><rect x="6.2" y="1.3" width="1.3" height="1.3"/><rect x="1.5" y="5.3" width="1.3" height="1.3"/><rect x="6.2" y="5.3" width="1.3" height="1.3"/></g></svg><svg style="left:31.5px;top:366.4px" width="10.6" height="8.8" viewBox="0 0 10.6 8.8" ><g fill="#a7b1c2"><path d="M4.2 0h6q.4 0 .4.4v6.4h-6.8v-6.4q0-.4.4-.4z"/><path d="M0 4.2 1.5 1.9h2.1v4.9h-3.6z"/><rect x="0" y="6.5" width="10.6" height=".9"/><circle cx="2.4" cy="7.4" r="1.3" stroke="#273747" stroke-width=".5"/><circle cx="8" cy="7.4" r="1.3" stroke="#273747" stroke-width=".5"/></g><path d="M.9 4.1 1.9 2.7h.9v1.4z" fill="#273747"/></svg><svg style="left:31.2px;top:419.4px" width="12.8" height="10.7" viewBox="0 0 12.8 10.7" ><g transform="translate(6.4 3.15)"><path d="M0 -3.15 2.90 -1.45V1.76L0 3.15-2.90 1.76V-1.45z" fill="#a7b1c2"/><path d="M-2.90 -1.45L0 .1 2.90 -1.45M0 .1V3.15" fill="none" stroke="#273747" stroke-width=".5" opacity=".8"/></g><g transform="translate(3.3 7.5)"><path d="M0 -3.15 2.90 -1.45V1.76L0 3.15-2.90 1.76V-1.45z" fill="#a7b1c2"/><path d="M-2.90 -1.45L0 .1 2.90 -1.45M0 .1V3.15" fill="none" stroke="#273747" stroke-width=".5" opacity=".8"/></g><g transform="translate(9.5 7.5)"><path d="M0 -3.15 2.90 -1.45V1.76L0 3.15-2.90 1.76V-1.45z" fill="#a7b1c2"/><path d="M-2.90 -1.45L0 .1 2.90 -1.45M0 .1V3.15" fill="none" stroke="#273747" stroke-width=".5" opacity=".8"/></g></svg><svg style="left:31.2px;top:446.8px" width="10" height="9" viewBox="0 0 10 9" ><g><path d="M2.6 0h7q.5 0 .4.5l-1.500 6.500q-.1.400-.6.400h-6.700q-.5 0-.4.800 0 .500.600.500h6.500l.3-.4.500.2-.4.900q-.1.200-.500.200h-6.600q-1.300 0-1.200-1.400l1.300-6.900q.2-1.300 1.300-1.300z" fill="#a7b1c2"/><path d="M3.600 2h5M3.300 3.500h5" stroke="#273747" stroke-width=".7"/></g></svg><svg style="left:14.8px;top:478.8px" width="10.4" height="9.6" viewBox="0 0 10.4 9.6" ><g transform="rotate(-40 5.200 4.800)"><rect x="-.3" y="1.900" width="11" height="5.800" rx=".8" fill="#a7b1c2"/><rect x="1.300" y="3.300" width="7.800" height="3" fill="none" stroke="#2e3f50" stroke-width=".6" opacity=".9"/><circle cx="5.200" cy="1.700" r=".6" fill="#2e3f50"/><circle cx="5.200" cy="7.900" r=".6" fill="#2e3f50"/></g></svg><svg style="left:14.8px;top:517px" width="11.9" height="9" viewBox="0 0 11.9 9" ><g fill="#a7b1c2"><path d="M0 0h1v8h10.900v1h-11.900z"/><rect x="2.300" y="5" width="1.500" height="2.500"/><rect x="4.500" y="3.400" width="1.500" height="4.100"/><rect x="6.700" y="4.400" width="1.500" height="3.100"/><rect x="8.900" y="1.500" width="1.500" height="6"/></g></svg></nav><div class="a" id="strip"></div><div class="a" id="sline"></div><div class="a" id="amact"></div><span class="t" style="left:48.9px;top:391.9px;font-size:11px;color:#fff;font-weight:700;transform:scaleX(0.9618);">Work Orders</span><svg style="left:31.6px;top:394px" width="11.1" height="7.2" viewBox="0 0 11.1 7.2" ><g fill="#fff"><path d="M0 2.900 2.300 0 4.600 2.900H3.100V5.500H7.300L8.600 7.200H2.300Q1.500 7.200 1.500 6.400V2.900z"/><path d="M11.100 4.300 8.800 7.200 6.500 4.300H8V1.700H3.800L2.500 0H8.800Q9.600 0 9.600 .8V4.300z"/></g></svg></body></html>
